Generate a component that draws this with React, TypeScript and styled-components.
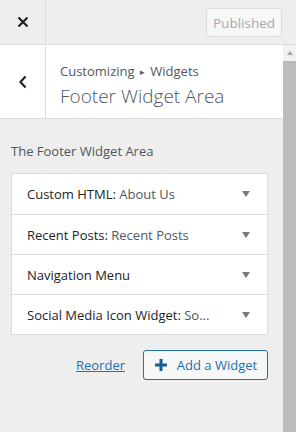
import styled, { createGlobalStyle } from "styled-components";

const GlobalStyle = createGlobalStyle`
  html, body {
    margin: 0;
    padding: 0;
    background: #eeeeee;
  }
  * {
    box-sizing: border-box;
  }
`;

type Widget = {
  name: string;
  title?: string;
};

const widgets: Widget[] = [
  { name: "Custom HTML", title: "About Us" },
  { name: "Recent Posts", title: "Recent Posts" },
  { name: "Navigation Menu" },
  { name: "Social Media Icon Widget", title: "So..." },
];

const CloseIcon = () => (
  <svg width="12" height="12" viewBox="0 0 12 12">
    <path d="M1.5 1.5 L10.5 10.5 M10.5 1.5 L1.5 10.5" stroke="#1d2327" strokeWidth="2.2" />
  </svg>
);

const BackIcon = () => (
  <svg width="10" height="14" viewBox="0 0 10 14">
    <path d="M7.5 1.5 L2.5 7 L7.5 12.5" stroke="#1d2327" strokeWidth="2.2" fill="none" />
  </svg>
);

const PlusIcon = () => (
  <svg width="14" height="14" viewBox="0 0 14 14">
    <path d="M7 1 V13 M1 7 H13" stroke="#135e96" strokeWidth="3" />
  </svg>
);

export default function App() {
  return (
    <>
      <GlobalStyle />
      <Sidebar>
        <Header>
          <CloseButton>
            <CloseIcon />
          </CloseButton>
          <HeaderActions>
            <PublishButton disabled>Published</PublishButton>
          </HeaderActions>
        </Header>
        <Main>
          <Content>
            <SectionHead>
              <BackButton>
                <BackIcon />
              </BackButton>
              <SectionTitles>
                <Breadcrumb>
                  Customizing <Arrow>▸</Arrow> Widgets
                </Breadcrumb>
                <SectionTitle>Footer Widget Area</SectionTitle>
              </SectionTitles>
            </SectionHead>
            <Body>
              <Description>The Footer Widget Area</Description>
              <WidgetList>
                {widgets.map((w) => (
                  <WidgetRow key={w.name}>
                    <WidgetName>
                      {w.name}
                      {w.title && (
                        <>
                          : <InTitle>{w.title}</InTitle>
                        </>
                      )}
                    </WidgetName>
                    <Caret />
                  </WidgetRow>
                ))}
              </WidgetList>
              <Actions>
                <ReorderLink href="#">Reorder</ReorderLink>
                <AddButton>
                  <PlusIcon />
                  Add a Widget
                </AddButton>
              </Actions>
            </Body>
          </Content>
          <Scrollbar>
            <ScrollArrow />
            <ScrollThumb />
          </Scrollbar>
        </Main>
      </Sidebar>
    </>
  );
}

const Sidebar = styled.div`
  width: 296px;
  height: 432px;
  display: flex;
  flex-direction: column;
  overflow: hidden;
  background: #eeeeee;
  font-family: "Open Sans", "Noto Sans", sans-serif;
`;

const Header = styled.div`
  height: 45px;
  display: flex;
  border-bottom: 1px solid #dddddd;
  background: #eeeeee;
`;

const CloseButton = styled.div`
  width: 46px;
  display: flex;
  align-items: center;
  justify-content: center;
  border-right: 1px solid #dddddd;
`;

const HeaderActions = styled.div`
  flex: 1;
  display: flex;
  justify-content: flex-end;
  align-items: flex-start;
  padding: 8px 14px 0 0;
`;

const PublishButton = styled.button`
  width: 76px;
  height: 29px;
  padding: 0;
  border: 1px solid #dcdcde;
  border-radius: 3px;
  background: #f6f7f7;
  color: #a7aaad;
  font-family: inherit;
  font-size: 13.5px;
`;

const Main = styled.div`
  flex: 1;
  display: flex;
  min-height: 0;
`;

const Content = styled.div`
  flex: 1;
  display: flex;
  flex-direction: column;
`;

const SectionHead = styled.div`
  height: 74px;
  display: flex;
  background: #ffffff;
  border-bottom: 1px solid #dddddd;
`;

const BackButton = styled.div`
  width: 46px;
  display: flex;
  align-items: center;
  justify-content: center;
  border-right: 1px solid #dddddd;
`;

const SectionTitles = styled.div`
  display: flex;
  flex-direction: column;
  justify-content: center;
  padding: 7px 0 0 14px;
`;

const Breadcrumb = styled.div`
  font-size: 13px;
  line-height: 20px;
  color: #50575e;
`;

const Arrow = styled.span`
  font-size: 9px;
  vertical-align: 1px;
  margin: 0 2px;
`;

const SectionTitle = styled.div`
  font-size: 19px;
  font-weight: 300;
  line-height: 28px;
  color: #50575e;
`;

const Body = styled.div`
  padding: 23px 15px 0 11px;
`;

const Description = styled.div`
  font-size: 13px;
  line-height: 18px;
  color: #50575e;
  margin-bottom: 13px;
`;

const WidgetList = styled.div`
  display: flex;
  flex-direction: column;
  background: #ffffff;
  border: 1px solid #dcdcde;
`;

const WidgetRow = styled.div`
  height: 40px;
  display: flex;
  align-items: center;
  justify-content: space-between;
  padding: 0 17px 0 15px;
  & + & {
    border-top: 1px solid #dcdcde;
  }
`;

const WidgetName = styled.div`
  font-size: 13px;
  color: #1d2327;
  white-space: nowrap;
`;

const InTitle = styled.span`
  color: #50575e;
`;

const Caret = styled.span`
  width: 0;
  height: 0;
  border-left: 4.5px solid transparent;
  border-right: 4.5px solid transparent;
  border-top: 6px solid #787c82;
`;

const Actions = styled.div`
  display: flex;
  justify-content: flex-end;
  align-items: center;
  gap: 18px;
  margin-top: 15px;
`;

const ReorderLink = styled.a`
  font-size: 13px;
  color: #2271b1;
  text-decoration: underline;
`;

const AddButton = styled.button`
  width: 125px;
  height: 30px;
  display: flex;
  align-items: center;
  justify-content: center;
  gap: 9px;
  padding: 0;
  border: 1px solid #2271b1;
  border-radius: 3px;
  background: #f6f7f7;
  color: #2271b1;
  font-family: inherit;
  font-size: 13px;
`;

const Scrollbar = styled.div`
  width: 13px;
  display: flex;
  flex-direction: column;
  background: #f1f1f1;
`;

const ScrollArrow = styled.div`
  height: 16px;
  display: flex;
  justify-content: center;
  align-items: center;
  &::before {
    content: "";
    border-left: 3.5px solid transparent;
    border-right: 3.5px solid transparent;
    border-bottom: 4px solid #a3a3a3;
  }
`;

const ScrollThumb = styled.div`
  flex: 1;
  background: #bcbcbc;
`;
